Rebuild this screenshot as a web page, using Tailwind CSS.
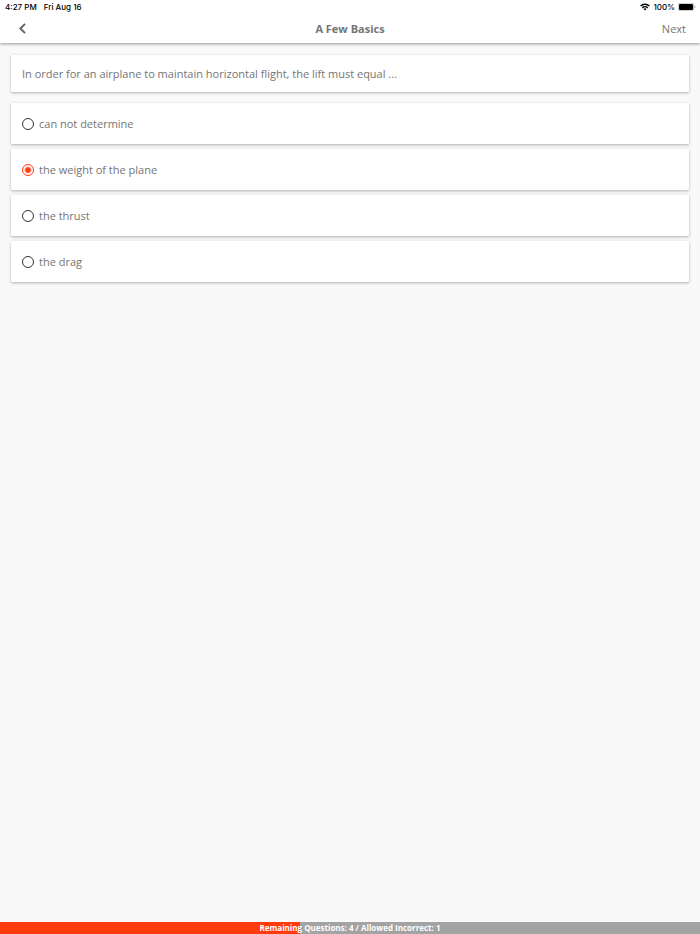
<!DOCTYPE html>
<html lang="en">
<head>
    <meta charset="UTF-8">
    <title>A Few Basics</title>
    <meta name="viewport" content="width=device-width, initial-scale=1.0">
    <script src="https://cdn.jsdelivr.net/npm/@tailwindcss/browser@4"></script>
</head>
<body class="min-h-screen flex flex-col bg-[#f9f9f9] font-['Open_Sans',sans-serif] text-[11px] leading-4 text-[#757575]">

    <!-- Header -->
    <header class="bg-white shadow-[0_1px_3px_rgba(0,0,0,0.4)]">
        <!-- Status bar -->
        <div class="h-[14px] pl-[5px] pr-1 flex items-center justify-between font-['Inter',sans-serif] text-[8px] leading-3 font-medium text-black">
            <div class="flex gap-[7px]">
                <span>4:27 PM</span>
                <span>Fri Aug 16</span>
            </div>
            <div class="flex items-center gap-[3px]">
                <svg class="w-[10px] h-2" viewBox="0 0 20 16" fill="none" stroke="currentColor" stroke-width="2.8" aria-hidden="true">
                    <path d="M1.2 6.2a12.5 12.5 0 0 1 17.6 0" />
                    <path d="M4.5 9.8a7.8 7.8 0 0 1 11 0" />
                    <path d="M10 15.2l-3-3.2a4.3 4.3 0 0 1 6 0z" fill="currentColor" stroke="none" />
                </svg>
                <span>100%</span>
                <svg class="w-[18px] h-2" viewBox="0 0 36 16" aria-hidden="true">
                    <rect x="0.5" y="0.5" width="31" height="15" rx="4" fill="none" stroke="#8a8a8a" />
                    <rect x="2" y="2" width="28" height="12" rx="2.5" fill="#000" />
                    <path d="M33 5.5c2.4.8 2.4 4.2 0 5z" fill="#8a8a8a" />
                </svg>
            </div>
        </div>
        <!-- Nav bar -->
        <nav class="h-[29px] px-[14px] grid grid-cols-3 items-center">
            <button type="button" class="justify-self-start w-4 h-4 flex items-center justify-center" aria-label="Back">
                <svg class="w-[7px] h-[11px]" viewBox="0 0 14 22" fill="none" stroke="#666" stroke-width="4" aria-hidden="true">
                    <path d="M12 1.8L2.8 11l9.2 9.2" />
                </svg>
            </button>
            <h1 class="justify-self-center font-bold">A Few Basics</h1>
            <button type="button" class="justify-self-end">Next</button>
        </nav>
    </header>

    <!-- Question -->
    <main class="flex-1 px-[11px] pt-3">
        <form>
            <p id="question" class="bg-white px-[11px] pt-[11px] pb-[10px] rounded-[1px] shadow-[0_1px_3px_rgba(0,0,0,0.3)]">In order for an airplane to maintain horizontal flight, the lift must equal ...</p>

            <!-- Answers -->
            <div class="mt-[11px] flex flex-col gap-[5px]" role="radiogroup" aria-labelledby="question">
                <label class="h-[41px] px-[11px] flex items-center gap-[5px] bg-white rounded-[1px] shadow-[0_1px_3px_rgba(0,0,0,0.3)]">
                    <input type="radio" name="answer" value="unknown" class="appearance-none w-3 h-3 rounded-full border border-[#333] checked:border-[#ff3b0d] checked:bg-[radial-gradient(circle,#ff3b0d_2px,transparent_4px)]">
                    <span>can not determine</span>
                </label>
                <label class="h-[41px] px-[11px] flex items-center gap-[5px] bg-white rounded-[1px] shadow-[0_1px_3px_rgba(0,0,0,0.3)]">
                    <input type="radio" name="answer" value="weight" checked class="appearance-none w-3 h-3 rounded-full border border-[#333] checked:border-[#ff3b0d] checked:bg-[radial-gradient(circle,#ff3b0d_2px,transparent_4px)]">
                    <span>the weight of the plane</span>
                </label>
                <label class="h-[41px] px-[11px] flex items-center gap-[5px] bg-white rounded-[1px] shadow-[0_1px_3px_rgba(0,0,0,0.3)]">
                    <input type="radio" name="answer" value="thrust" class="appearance-none w-3 h-3 rounded-full border border-[#333] checked:border-[#ff3b0d] checked:bg-[radial-gradient(circle,#ff3b0d_2px,transparent_4px)]">
                    <span>the thrust</span>
                </label>
                <label class="h-[41px] px-[11px] flex items-center gap-[5px] bg-white rounded-[1px] shadow-[0_1px_3px_rgba(0,0,0,0.3)]">
                    <input type="radio" name="answer" value="drag" class="appearance-none w-3 h-3 rounded-full border border-[#333] checked:border-[#ff3b0d] checked:bg-[radial-gradient(circle,#ff3b0d_2px,transparent_4px)]">
                    <span>the drag</span>
                </label>
            </div>
        </form>
    </main>

    <!-- Progress -->
    <footer class="relative h-3 bg-[#a3a3a3]">
        <div class="h-full bg-[#ff3b0d]" style="width: 42.86%"></div>
        <p class="absolute inset-0 text-center text-[8px] leading-3 font-bold text-white">Remaining Questions: 4 / Allowed Incorrect: 1</p>
    </footer>

</body>
</html>
